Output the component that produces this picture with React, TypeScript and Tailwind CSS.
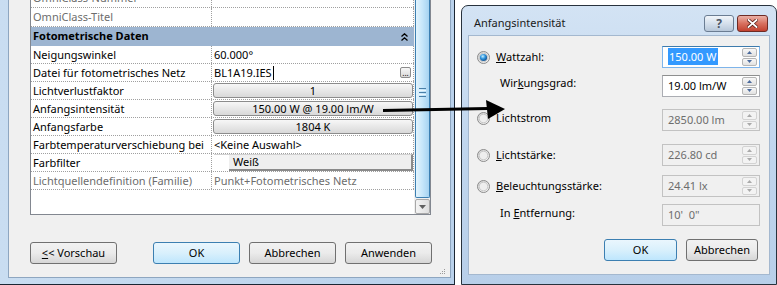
import React from "react";

type PropRowData = {
  label: string;
  value: string;
  kind: "text" | "file" | "button" | "swatch";
  muted?: boolean;
};

const rows: PropRowData[] = [
  { label: "Neigungswinkel", value: "60.000°", kind: "text" },
  { label: "Datei für fotometrisches Netz", value: "BL1A19.IES", kind: "file" },
  { label: "Lichtverlustfaktor", value: "1", kind: "button" },
  { label: "Anfangsintensität", value: "150.00 W @ 19.00 lm/W", kind: "button" },
  { label: "Anfangsfarbe", value: "1804 K", kind: "button" },
  { label: "Farbtemperaturverschiebung bei", value: "<Keine Auswahl>", kind: "text" },
  { label: "Farbfilter", value: "Weiß", kind: "swatch" },
  { label: "Lichtquellendefinition (Familie)", value: "Punkt+Fotometrisches Netz", kind: "text", muted: true },
];

// ----------------- small controls -----------------
function Radio({ checked }: { checked?: boolean }) {
  return (
    <svg width="13" height="13" viewBox="0 0 13 13" className="shrink-0">
      <defs>
        <linearGradient id="radioRing" x1="0" y1="0" x2="1" y2="1">
          <stop offset="0" stopColor="#d2d2d2" />
          <stop offset="1" stopColor="#fbfbfb" />
        </linearGradient>
        <radialGradient id="radioDot" cx="0.4" cy="0.35" r="0.75">
          <stop offset="0" stopColor="#c4f0ff" />
          <stop offset="0.45" stopColor="#2e93dc" />
          <stop offset="1" stopColor="#0b3f7a" />
        </radialGradient>
      </defs>
      <circle cx="6.5" cy="6.5" r="6" fill="url(#radioRing)" stroke="#8a8a8a" />
      <circle cx="6.5" cy="6.5" r="4.3" fill="#eeeeee" stroke="#bdbdbd" strokeWidth="0.8" />
      {checked && <circle cx="6.5" cy="6.5" r="3.6" fill="url(#radioDot)" />}
    </svg>
  );
}

function SpinHalf({ up, disabled }: { up?: boolean; disabled?: boolean }) {
  return (
    <div
      className={`flex flex-1 items-center justify-center rounded-[2px] border ${
        disabled ? "border-[#d3d3d3] bg-[#f3f3f3]" : "border-[#b5b5b5] bg-gradient-to-b from-[#f8f8f8] to-[#e1e1e1]"
      }`}
    >
      <svg width="5" height="3" viewBox="0 0 5 3">
        <path d={up ? "M0 3 L2.5 0 L5 3Z" : "M0 0 L2.5 3 L5 0Z"} fill={disabled ? "#a9a9a9" : "#4b6a9c"} />
      </svg>
    </div>
  );
}

function Field({
  value,
  disabled,
  focused,
  spin = true,
}: {
  value: string;
  disabled?: boolean;
  focused?: boolean;
  spin?: boolean;
}) {
  return (
    <div
      className={`ml-auto mr-[9px] flex h-[22px] w-[98px] shrink-0 border ${
        focused
          ? "border-[#7eb4ea] border-t-[#3d7bad] bg-white"
          : disabled
          ? "border-[#c2c2c2] bg-[#f0f0f0]"
          : "border-[#abadb3] border-t-[#8e8f8f] bg-white"
      }`}
    >
      <div className={`flex-1 whitespace-pre pl-[5px] pt-[2px] leading-[16px] ${disabled ? "text-[#6d6d6d]" : ""}`}>
        {focused ? <span className="bg-[#3399ff] px-[1px] py-[1px] text-white">{value}</span> : value}
      </div>
      {spin && (
        <div className="flex w-[17px] flex-col gap-[1px] py-[1px] pr-[2px]">
          <SpinHalf up disabled={disabled} />
          <SpinHalf disabled={disabled} />
        </div>
      )}
    </div>
  );
}

function WinButton({ children, primary, className = "" }: { children: React.ReactNode; primary?: boolean; className?: string }) {
  return (
    <div
      className={`flex h-[22px] items-center justify-center rounded-[3px] border ${
        primary
          ? "border-[#3c7fb1] bg-gradient-to-b from-[#eaf6fd] via-[#d9f0fc] to-[#bee6fd]"
          : "border-[#707070] bg-gradient-to-b from-[#f2f2f2] via-[#ebebeb] to-[#d6d6d6]"
      } ${className}`}
    >
      {children}
    </div>
  );
}

// ----------------- property table -----------------
function ValueCell({ row }: { row: PropRowData }) {
  if (row.kind === "button") {
    return (
      <div className="ml-[1px] mt-[1px] flex h-[15px] items-center justify-center rounded-[3px] border border-[#8c8c8c] bg-gradient-to-b from-[#f7f7f7] to-[#d9d9d9] leading-none">
        {row.value}
      </div>
    );
  }
  if (row.kind === "file") {
    return (
      <div className="flex h-full items-center pl-[2px]">
        <span className="leading-[17px]">{row.value}</span>
        <span className="ml-[1px] h-[14px] w-[1px] bg-black" />
        <span className="ml-auto mr-[2px] flex h-[11px] w-[11px] items-end justify-center rounded-[2px] border border-[#8c8c8c] bg-gradient-to-b from-[#f7f7f7] to-[#d9d9d9] pb-[1px] text-[8px] leading-[6px]">
          ...
        </span>
      </div>
    );
  }
  if (row.kind === "swatch") {
    return (
      <div className="flex h-full pl-[2px]">
        <div className="w-[15px] border-t border-[#d0d0d0] bg-white" />
        <div className="flex-1 border-t border-r-2 border-b-2 border-t-[#d0d0d0] border-r-[#8a8a8a] border-b-[#8a8a8a] bg-[#efefef] pl-[4px] leading-[14px]">
          {row.value}
        </div>
      </div>
    );
  }
  return <div className={`pl-[2px] leading-[17px] ${row.muted ? "text-[#6d6d6d]" : ""}`}>{row.value}</div>;
}

function PropRow({ row, h = "h-[18px]" }: { row: PropRowData; h?: string }) {
  return (
    <div className={`flex ${h} border-b border-dotted border-[#a0a0a0]`}>
      <div
        className={`w-[181px] shrink-0 overflow-hidden whitespace-nowrap border-r border-dotted border-[#a0a0a0] pl-[2px] leading-[17px] ${
          row.muted ? "text-[#6d6d6d]" : ""
        }`}
      >
        {row.label}
      </div>
      <div className="w-[202px] shrink-0 border-r border-dotted border-[#a0a0a0]">
        <ValueCell row={row} />
      </div>
    </div>
  );
}

function Scrollbar() {
  return (
    <div className="flex w-[16px] shrink-0 flex-col bg-[#f0f0f0] pl-[1px]">
      {/* thumb */}
      <div className="flex h-[198px] items-center justify-center rounded-b-[2px] border border-t-0 border-[#3c7fb1] bg-gradient-to-r from-[#e3f4fd] via-[#c6e6fa] to-[#a6d3f1] pb-[12px]">
        <div className="flex flex-col gap-[1px]">
          <div className="h-[1px] w-[7px] bg-[#4a7fa8]" />
          <div className="h-[1px] w-[7px] bg-[#eaf6fd]" />
          <div className="h-[1px] w-[7px] bg-[#4a7fa8]" />
          <div className="h-[1px] w-[7px] bg-[#eaf6fd]" />
          <div className="h-[1px] w-[7px] bg-[#4a7fa8]" />
        </div>
      </div>
      {/* down arrow */}
      <div className="mt-[1px] flex h-[15px] items-center justify-center rounded-[2px] border border-[#a8a8a8] bg-gradient-to-r from-[#f4f4f4] to-[#dedede]">
        <svg width="7" height="4" viewBox="0 0 7 4">
          <path d="M0 0 L3.5 4 L7 0Z" fill="#606060" />
        </svg>
      </div>
    </div>
  );
}

function TypeProperties() {
  return (
    <div className="flex h-[285px] w-[455px] shrink-0 flex-col border-r border-b border-[#1b2633] bg-gradient-to-r from-[#c9ddf1] to-[#b9d1eb] pb-[6px] pl-[8px] pr-[3px]">
      <div className="flex flex-1 flex-col border-x border-b border-[#8ea6c0] bg-[#f0f0f0] pl-[21px]">
        {/* table */}
        <div className="flex h-[215px] w-[401px] overflow-hidden border-x border-b border-[#828790] bg-white">
          <div className="-mt-[11px] w-[383px] shrink-0">
            <PropRow row={{ label: "OmniClass-Nummer", value: "", kind: "text", muted: true }} h="h-[19px]" />
            <PropRow row={{ label: "OmniClass-Titel", value: "", kind: "text", muted: true }} h="h-[19px]" />
            <div className="flex h-[19px] items-center justify-between bg-[#9db5d1] pl-[2px] pr-[6px] font-bold">
              <span>Fotometrische Daten</span>
              <svg width="7" height="8" viewBox="0 0 7 8">
                <path d="M0.5 3.5 L3.5 0.8 L6.5 3.5 M0.5 7.5 L3.5 4.8 L6.5 7.5" stroke="#000" strokeWidth="1.3" fill="none" />
              </svg>
            </div>
            {rows.map((r) => (
              <PropRow key={r.label} row={r} />
            ))}
          </div>
          <Scrollbar />
        </div>

        {/* buttons */}
        <div className="mt-[27px] flex">
          <WinButton className="w-[87px]">
            <span>
              <span className="underline">&lt;</span>&lt; Vorschau
            </span>
          </WinButton>
          <WinButton primary className="ml-[36px] w-[87px]">
            OK
          </WinButton>
          <WinButton className="ml-[9px] w-[87px]">Abbrechen</WinButton>
          <WinButton className="ml-[9px] w-[87px]">Anwenden</WinButton>
        </div>

        {/* size grip */}
        <div className="mr-[4px] mt-auto mb-[2px] self-end">
          <svg width="7" height="7" viewBox="0 0 7 7">
            {[
              [5, 1],
              [3, 3],
              [5, 3],
              [1, 5],
              [3, 5],
              [5, 5],
            ].map(([x, y]) => (
              <rect key={`${x}-${y}`} x={x} y={y} width="1" height="1" fill="#9a9a9a" />
            ))}
          </svg>
        </div>
      </div>
    </div>
  );
}

// ----------------- intensity dialog -----------------
function IntensityDialog() {
  return (
    <div className="ml-[6px] mt-[5px] flex h-[280px] w-[316px] shrink-0 flex-col rounded-t-[7px] border border-[#28323d] bg-gradient-to-b from-[#d3e3f4] via-[#c0d6ee] to-[#b8cfe9] px-[6px] pb-[9px]">
      {/* title bar */}
      <div className="flex h-[29px] items-center pt-[6px]">
        <span className="pl-[6px] text-[#1a1a1a]">Anfangsintensität</span>
        <div className="ml-auto mr-[2px] flex gap-[3px]">
          <div className="flex h-[17px] w-[30px] items-center justify-center rounded-[3px] border border-[#6b7d93] bg-gradient-to-b from-[#f1f5fa] via-[#d5e0ec] to-[#b7c7d9] text-[12px] font-bold leading-none text-[#4a5564]">
            ?
          </div>
          <div className="flex h-[17px] w-[31px] items-center justify-center rounded-[3px] border border-[#6e2b25] bg-gradient-to-b from-[#eab0a6] via-[#d8705f] to-[#c2402f]">
            <svg width="11" height="9" viewBox="0 0 11 9">
              <path d="M1.5 1 L9.5 8 M9.5 1 L1.5 8" stroke="#5a1d16" strokeWidth="3.4" strokeLinecap="square" />
              <path d="M1.5 1 L9.5 8 M9.5 1 L1.5 8" stroke="#ffffff" strokeWidth="1.8" strokeLinecap="square" />
            </svg>
          </div>
        </div>
      </div>

      {/* body */}
      <div className="flex flex-1 flex-col border border-[#a4b8cf] bg-[#f0f0f0] pl-[8px] pt-[10px]">
        <div className="flex items-center">
          <Radio checked />
          <span className="ml-[6px]">
            <span className="underline">W</span>attzahl:
          </span>
          <Field value="150.00 W" focused />
        </div>

        <div className="mt-[7px] flex items-start">
          <span className="pl-[23px]">
            Wir<span className="underline">k</span>ungsgrad:
          </span>
          <Field value="19.00 lm/W" />
        </div>

        <div className="mt-[12px] flex items-start">
          <div className="flex items-center pt-[1px]">
            <Radio />
            <span className="ml-[6px]">Lichtstrom</span>
          </div>
          <Field value="2850.00 lm" disabled />
        </div>

        <div className="mt-[13px] flex items-center">
          <Radio />
          <span className="ml-[6px]">
            <span className="underline">L</span>ichtstärke:
          </span>
          <Field value="226.80 cd" disabled />
        </div>

        <div className="mt-[9px] flex items-center">
          <Radio />
          <span className="ml-[6px]">
            <span className="underline">B</span>eleuchtungsstärke:
          </span>
          <Field value="24.41 lx" disabled />
        </div>

        <div className="mt-[7px] flex items-start">
          <span className="pl-[23px] pt-[1px]">
            In <span className="underline">E</span>ntfernung:
          </span>
          <Field value={"10'  0\""} disabled spin={false} />
        </div>

        <div className="mr-[11px] mt-[13px] flex justify-end gap-[9px]">
          <WinButton primary className="w-[73px]">
            OK
          </WinButton>
          <WinButton className="w-[72px]">Abbrechen</WinButton>
        </div>
      </div>
    </div>
  );
}

function Arrow() {
  return (
    <svg className="absolute left-[380px] top-[96px]" width="130" height="26" viewBox="0 0 130 26">
      <path d="M3 14.5 L108 12.5" stroke="#000" strokeWidth="3" />
      <path d="M106 4 L125 13 L108 23 Z" fill="#000" />
    </svg>
  );
}

export default function App() {
  return (
    <div className="relative flex h-[285px] w-[777px] overflow-hidden bg-white font-['Noto_Sans',sans-serif] text-[11px] text-black">
      <TypeProperties />
      <IntensityDialog />
      <Arrow />
    </div>
  );
}
